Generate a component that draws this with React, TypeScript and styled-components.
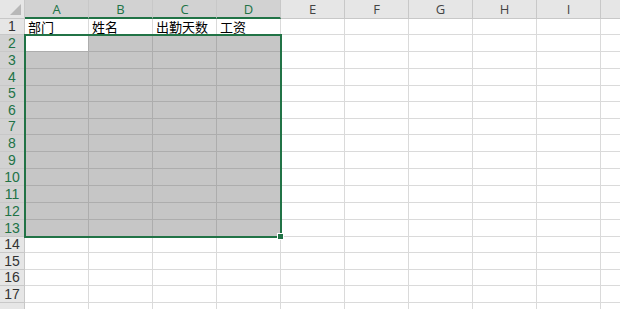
import styled, { createGlobalStyle } from 'styled-components';

const COLS = ['A', 'B', 'C', 'D', 'E', 'F', 'G', 'H', 'I', 'J'];
const ROW_HEIGHTS = [16, 17, 17, 17, 16, 17, 16, 17, 17, 17, 17, 17, 17, 16, 17, 16, 17, 17];
const HEADER_ROW = ['部门', '姓名', '出勤天数', '工资'];
// last column / row only peek in at the window edge, their labels fall outside it
const VISIBLE_COLS = 9;
const VISIBLE_ROWS = 17;

// selection A2:D13, active cell A2
const inSel = (r: number, c: number) => r >= 2 && r <= 13 && c <= 3;

const colors = {
  green: '#217346',
  header: '#e6e6e6',
  headerSel: '#d2d2d2',
  headerLine: '#c8c8c8',
  grid: '#dadada',
  selFill: '#c6c6c6',
  selGrid: '#adadad',
  headText: '#444444',
};

const GlobalStyle = createGlobalStyle`
  html, body {
    margin: 0;
    padding: 0;
    background: #ffffff;
    overflow: hidden;
  }
`;

export default function App() {
  return (
    <>
      <GlobalStyle />
      <Sheet>
        <Grid $rows={ROW_HEIGHTS}>
          <Corner>
            <CornerMark />
          </Corner>
          {COLS.map((c, i) => (
            <ColHead key={c} $sel={i <= 3}>
              {i < VISIBLE_COLS && c}
            </ColHead>
          ))}
          {ROW_HEIGHTS.map((_, ri) => {
            const r = ri + 1;
            const rowSel = r >= 2 && r <= 13;
            return [
              <RowHead key={`h${r}`} $sel={rowSel}>
                {r <= VISIBLE_ROWS && r}
              </RowHead>,
              ...COLS.map((c, ci) => (
                <Cell
                  key={`${c}${r}`}
                  $sel={inSel(r, ci)}
                  $active={r === 2 && ci === 0}
                >
                  {r === 1 && HEADER_ROW[ci]}
                </Cell>
              )),
            ];
          })}
        </Grid>
        <Selection />
        <FillHandle />
      </Sheet>
    </>
  );
}

const Sheet = styled.div`
  position: relative;
  width: 620px;
  height: 309px;
  overflow: hidden;
`;

const Grid = styled.div<{ $rows: number[] }>`
  display: grid;
  grid-template-columns: 25px repeat(10, 64px);
  grid-template-rows: 19px ${(p) => p.$rows.map((h) => `${h}px`).join(' ')};
  width: max-content;
`;

const Corner = styled.div`
  position: relative;
  background: ${colors.header};
  border-right: 1px solid ${colors.headerLine};
  border-bottom: 1px solid ${colors.headerLine};
  box-sizing: border-box;
`;

const CornerMark = styled.div`
  position: absolute;
  right: 3px;
  bottom: 3px;
  width: 0;
  height: 0;
  border-left: 11px solid transparent;
  border-bottom: 11px solid #b8b8b8;
`;

const ColHead = styled.div<{ $sel: boolean }>`
  display: flex;
  align-items: center;
  justify-content: center;
  box-sizing: border-box;
  background: ${(p) => (p.$sel ? colors.headerSel : colors.header)};
  border-right: 1px solid ${colors.headerLine};
  border-bottom: ${(p) => (p.$sel ? `2px solid ${colors.green}` : `1px solid ${colors.headerLine}`)};
  color: ${(p) => (p.$sel ? colors.green : colors.headText)};
  font-family: 'Open Sans', 'Noto Sans', sans-serif;
  font-size: 13px;
  line-height: 16px;
  padding-top: ${(p) => (p.$sel ? '1px' : '0')};
`;

const RowHead = styled.div<{ $sel: boolean }>`
  display: flex;
  align-items: center;
  justify-content: center;
  box-sizing: border-box;
  background: ${(p) => (p.$sel ? colors.headerSel : colors.header)};
  border-right: 1px solid ${colors.headerLine};
  border-bottom: 1px solid ${colors.headerLine};
  color: ${(p) => (p.$sel ? colors.green : '#333333')};
  font-family: 'Liberation Sans', Arial, sans-serif;
  font-size: 14px;
  line-height: 15px;
`;

const Cell = styled.div<{ $sel: boolean; $active: boolean }>`
  display: flex;
  align-items: center;
  box-sizing: border-box;
  padding: 1px 0 0 3px;
  background: ${(p) => (p.$active ? '#ffffff' : p.$sel ? colors.selFill : '#ffffff')};
  border-right: 1px solid ${(p) => (p.$sel ? colors.selGrid : colors.grid)};
  border-bottom: 1px solid ${(p) => (p.$sel ? colors.selGrid : colors.grid)};
  color: #000000;
  font-family: 'Noto Sans CJK SC', sans-serif;
  font-size: 13px;
  line-height: 14px;
  white-space: nowrap;
`;

const Selection = styled.div`
  position: absolute;
  left: 24px;
  top: 34px;
  width: 258px;
  height: 204px;
  box-sizing: border-box;
  border: 2px solid ${colors.green};
  pointer-events: none;
`;

const FillHandle = styled.div`
  position: absolute;
  left: 277px;
  top: 233px;
  width: 7px;
  height: 7px;
  box-sizing: border-box;
  background: ${colors.green};
  border: 1px solid #ffffff;
`;
